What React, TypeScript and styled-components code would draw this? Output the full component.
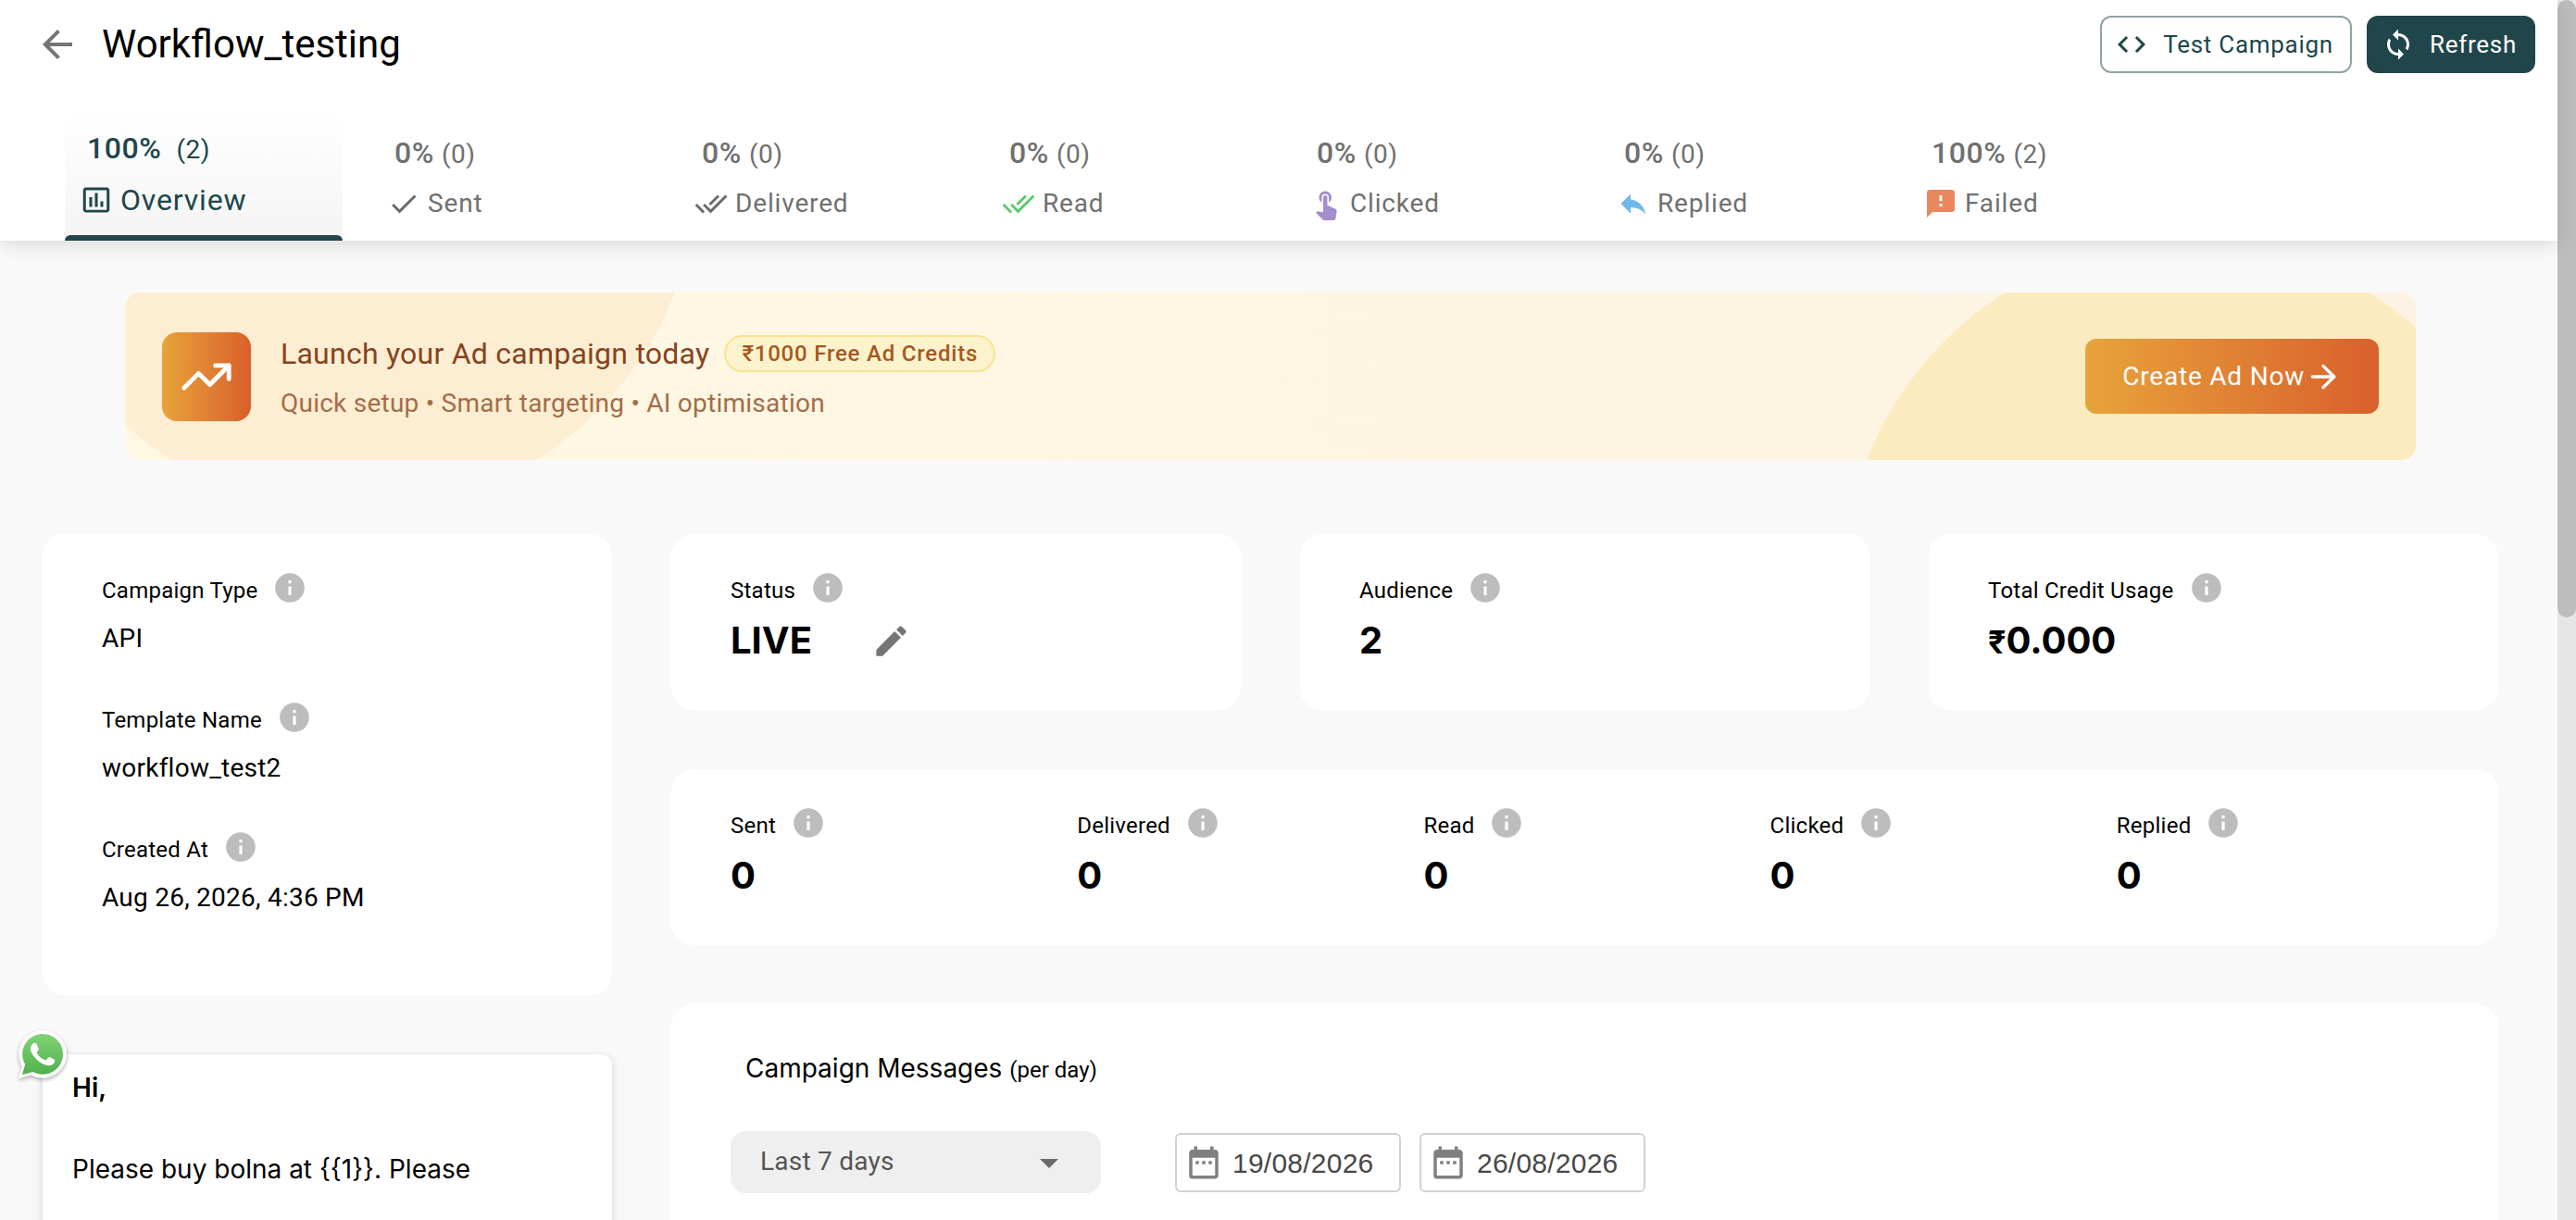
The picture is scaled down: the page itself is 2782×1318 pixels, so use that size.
import React from "react";
import styled, { createGlobalStyle, css } from "styled-components";
import {
  MdArrowBack,
  MdArrowDropDown,
  MdCheck,
  MdCode,
  MdDateRange,
  MdDoneAll,
  MdEdit,
  MdFeedback,
  MdInfo,
  MdInsertChartOutlined,
  MdLoop,
  MdReply,
  MdTouchApp,
} from "react-icons/md";
import { ArrowRight, TrendingUp } from "lucide-react";

const teal = "#20464b";
const roboto = 'Roboto, "Liberation Sans", sans-serif';
const inter = 'Inter, "Liberation Sans", sans-serif';
const sunset = "linear-gradient(90deg, #e8a33b 0%, #d9602c 100%)";

const GlobalStyle = createGlobalStyle`
  *, *::before, *::after { box-sizing: border-box; }
  body { margin: 0; background: #f9f9f9; font-family: ${roboto}; color: #000; }
  button, select, input { font: inherit; color: inherit; letter-spacing: inherit; }
  h1, h2, p, dl, dt, dd { margin: 0; font-weight: 400; }
  svg { display: block; flex: none; }
`;

const Shell = styled.div`
  display: flex;
  height: 100vh;
  overflow: hidden;
  letter-spacing: 0.015em;
`;

const Page = styled.div`
  flex: 1;
  min-width: 0;
  display: flex;
  flex-direction: column;
`;

const ScrollTrack = styled.div`
  flex: none;
  width: 20px;
  background: #e6e6e6;
`;

const ScrollThumb = styled.div`
  height: 50.6%;
  border-radius: 10px;
  background: #bdbdbd;
`;

const Header = styled.header`
  position: relative;
  z-index: 1;
  flex: none;
  background: #fff;
  box-shadow: 0 4px 20px rgba(0, 0, 0, 0.13);
`;

const TitleRow = styled.div`
  display: flex;
  align-items: center;
  height: 96px;
  padding: 0 24px 0 38px;
`;

const BackButton = styled.button`
  padding: 0;
  border: 0;
  background: none;
  color: #757575;
  cursor: pointer;
`;

const Title = styled.h1`
  flex: 1;
  padding-left: 24px;
  font-size: 42px;
  line-height: 48px;
  letter-spacing: 0;
`;

const Actions = styled.div`
  display: flex;
  gap: 16px;
`;

const ActionButton = styled.button<{ $filled?: boolean }>`
  display: flex;
  align-items: center;
  gap: 16px;
  height: 62px;
  padding: 0 18px 0 14px;
  border: 2px solid ${(p) => (p.$filled ? teal : "#90a3a5")};
  border-radius: 12px;
  background: ${(p) => (p.$filled ? teal : "#fff")};
  color: ${(p) => (p.$filled ? "#fff" : teal)};
  font-size: 26px;
  letter-spacing: 0.028em;
  cursor: pointer;
`;

const Tabs = styled.nav`
  display: flex;
  gap: 32px;
  padding: 24px 70px 0;
`;

const Tab = styled.button<{ $active?: boolean }>`
  display: flex;
  flex-direction: column;
  gap: 13px;
  width: 300px;
  height: 140px;
  padding: 25px 16px 0;
  border: 0;
  background: none;
  color: #707070;
  font-size: 28px;
  line-height: 40px;
  letter-spacing: 0.03em;
  text-align: left;
  cursor: pointer;
  ${(p) =>
    p.$active &&
    css`
      position: relative;
      gap: 14px;
      padding-top: 20px;
      background: linear-gradient(#fff, #f4f4f4);
      color: ${teal};
      &::after {
        content: "";
        position: absolute;
        inset: auto 0 0;
        height: 6px;
        border-radius: 6px 6px 0 0;
        background: ${teal};
      }
    `}
`;

const TabCount = styled.span<{ $active?: boolean }>`
  display: flex;
  align-items: baseline;
  gap: ${(p) => (p.$active ? 16 : 8)}px;
  padding-left: 8px;
  letter-spacing: 0.02em;
  strong {
    font-size: 32px;
    font-weight: 500;
  }
`;

const TabLabel = styled.span<{ $active?: boolean; $tint: string }>`
  display: flex;
  align-items: center;
  gap: 8px;
  font-size: ${(p) => (p.$active ? 32 : 28)}px;
  svg {
    color: ${(p) => p.$tint};
  }
`;

const Content = styled.main`
  flex: 1;
  min-height: 0;
  padding: 56px 64px 0 46px;
`;

const Banner = styled.section`
  position: relative;
  display: flex;
  align-items: center;
  gap: 32px;
  margin: 0 89px 80px;
  padding: 42px 40px;
  height: 181px;
  border-radius: 16px;
  overflow: hidden;
  background: linear-gradient(90deg, #fff8e3 0%, #fef6e2 50%, #fdf3e3 100%);
`;

const Blob = styled.span<{ $side: "left" | "right" }>`
  position: absolute;
  width: 30%;
  aspect-ratio: 1;
  border-radius: 50%;
  ${(p) =>
    p.$side === "left"
      ? "left: -5%; top: -505px; background: #fdeed3;"
      : "right: -5%; bottom: -505px; background: #fcebbf;"}
`;

const BannerIcon = styled.div`
  position: relative;
  display: grid;
  place-items: center;
  width: 96px;
  height: 96px;
  border-radius: 16px;
  background: ${sunset};
  color: #fff;
`;

const BannerText = styled.div`
  position: relative;
  flex: 1;
  display: flex;
  flex-direction: column;
  gap: 14px;
  padding-top: 4px;
  line-height: 40px;
`;

const BannerHeading = styled.div`
  display: flex;
  align-items: center;
  gap: 16px;
  h2 {
    color: #86431d;
    font-size: 32px;
  }
`;

const Chip = styled.span`
  height: 40px;
  padding: 0 17px;
  border: 2px solid #f7e391;
  border-radius: 20px;
  background: #fcf3cd;
  color: #a7581f;
  font-size: 24px;
  font-weight: 500;
  line-height: 37px;
  letter-spacing: 0.033em;
`;

const BannerNote = styled.p`
  color: #a56c47;
  font-size: 28px;
`;

const CreateButton = styled.button`
  position: relative;
  display: flex;
  align-items: center;
  height: 81px;
  padding: 0 40px;
  border: 0;
  border-radius: 12px;
  background: ${sunset};
  color: #fff;
  font-size: 28px;
  letter-spacing: 0.028em;
  cursor: pointer;
`;

const Columns = styled.div`
  display: grid;
  grid-template-columns: repeat(4, minmax(0, 1fr));
  gap: 64px;
`;

const Side = styled.div`
  display: flex;
  flex-direction: column;
  gap: 64px;
`;

const Primary = styled.div`
  grid-column: span 3;
  display: flex;
  flex-direction: column;
  gap: 64px;
`;

const StatGrid = styled.div`
  display: grid;
  grid-template-columns: repeat(3, minmax(0, 1fr));
  gap: 64px;
`;

const Card = styled.section`
  border-radius: 24px;
  background: #fff;
`;

const DetailsCard = styled(Card)`
  display: flex;
  flex-direction: column;
  gap: 48px;
  padding: 39px 64px 87px;
`;

const StatCard = styled(Card)`
  padding: 39px 64px 51px;
`;

const TotalsCard = styled(Card)`
  display: grid;
  grid-template-columns: repeat(5, minmax(0, 1fr));
  padding: 39px 38px 51px 64px;
`;

const Label = styled.dt`
  display: flex;
  align-items: flex-end;
  gap: 16px;
  font-size: 24px;
  line-height: 32px;
  svg {
    color: #bdbdbd;
  }
`;

const DetailValue = styled.dd`
  margin-top: 18px;
  font-size: 28px;
  line-height: 36px;
`;

const StatValue = styled.dd`
  display: flex;
  align-items: center;
  gap: 64px;
  height: 48px;
  margin-top: 14px;
  font-family: ${inter};
  font-size: 40px;
  font-weight: 700;
  line-height: 48px;
  letter-spacing: 0;
  small {
    font-size: 34px;
    line-height: 1;
  }
`;

const EditButton = styled.button`
  padding: 0;
  border: 0;
  background: none;
  color: #757575;
  cursor: pointer;
`;

const MessageCard = styled(Card)`
  position: relative;
  min-height: 400px;
  padding: 14px 32px;
  border-radius: 12px;
  box-shadow: 0 2px 10px rgba(0, 0, 0, 0.16);
  font-family: ${inter};
  font-size: 28px;
  line-height: 44px;
  letter-spacing: 0;
`;

const Greeting = styled.p`
  margin-bottom: 44px;
  font-weight: 600;
`;

const WhatsAppBadge = styled.svg`
  position: absolute;
  left: -26px;
  top: -26px;
  width: 52px;
  height: 52px;
  overflow: visible;
  filter: drop-shadow(0 2px 2px rgba(0, 0, 0, 0.3));
`;

const ChartCard = styled(Card)`
  min-height: 600px;
  padding: 49px 64px;
`;

const ChartTitle = styled.h2`
  height: 40px;
  padding-left: 16px;
  font-family: ${inter};
  font-size: 28px;
  line-height: 40px;
  letter-spacing: 0;
  small {
    font-family: ${roboto};
    font-size: 24px;
    line-height: 1;
  }
`;

const Filters = styled.div`
  display: flex;
  align-items: center;
  gap: 20px;
  margin-top: 48px;
`;

const RangeField = styled.label`
  position: relative;
  margin-right: 60px;
  color: #555;
  svg {
    position: absolute;
    right: 32px;
    top: 10px;
    color: #6b6b6b;
    pointer-events: none;
  }
`;

const RangeSelect = styled.select`
  appearance: none;
  display: block;
  width: 400px;
  height: 67px;
  padding: 0 32px 2px;
  border: 0;
  border-radius: 16px;
  background: #efefef;
  font-size: 28px;
`;

const DateField = styled.label`
  display: flex;
  align-items: center;
  gap: 10px;
  width: 244px;
  height: 64px;
  padding: 0 8px;
  border: 2px solid #d2d2d2;
  border-radius: 6px;
  color: #808080;
`;

const DateInput = styled.input`
  flex: 1;
  min-width: 0;
  padding: 2px 0 0;
  border: 0;
  background: none;
  color: #484848;
  font-family: "Liberation Sans", Arial, sans-serif;
  font-size: 30px;
`;

const grey = "#6b6b6b";

const tabs = [
  { label: "Overview", percent: 100, count: 2, Icon: MdInsertChartOutlined, tint: teal, active: true },
  { label: "Sent", percent: 0, count: 0, Icon: MdCheck, tint: grey },
  { label: "Delivered", percent: 0, count: 0, Icon: MdDoneAll, tint: grey },
  { label: "Read", percent: 0, count: 0, Icon: MdDoneAll, tint: "#5bcb6d" },
  { label: "Clicked", percent: 0, count: 0, Icon: MdTouchApp, tint: "#a38fcf" },
  { label: "Replied", percent: 0, count: 0, Icon: MdReply, tint: "#6fb9ea" },
  { label: "Failed", percent: 100, count: 2, Icon: MdFeedback, tint: "#e9875e" },
];

const details = [
  ["Campaign Type", "API"],
  ["Template Name", "workflow_test2"],
  ["Created At", "Aug 26, 2026, 4:36 PM"],
];

const totals = ["Sent", "Delivered", "Read", "Clicked", "Replied"];

const bubble =
  "M12.05 0C5.495 0 .16 5.335.157 11.892c0 2.096.547 4.142 1.588 5.945L.057 24l6.305-1.654a11.882 11.882 0 0 0 5.683 1.448h.005c6.554 0 11.89-5.335 11.893-11.893A11.821 11.821 0 0 0 20.465 3.488 11.815 11.815 0 0 0 12.05 0z";
const handset =
  "M17.472 14.382c-.297-.149-1.758-.867-2.03-.967-.273-.099-.471-.148-.67.15-.197.297-.767.966-.94 1.164-.173.199-.347.223-.644.075-.297-.15-1.255-.463-2.39-1.475-.883-.788-1.48-1.761-1.653-2.059-.173-.297-.018-.458.13-.606.134-.133.298-.347.446-.52.149-.174.198-.298.298-.497.099-.198.05-.371-.025-.52-.075-.149-.669-1.612-.916-2.207-.242-.579-.487-.5-.669-.51-.173-.008-.371-.01-.57-.01-.198 0-.52.074-.792.372-.272.297-1.04 1.016-1.04 2.479 0 1.462 1.065 2.875 1.213 3.074.149.198 2.096 3.2 5.077 4.487.709.306 1.262.489 1.694.625.712.227 1.36.195 1.871.118.571-.085 1.758-.719 2.006-1.413.248-.694.248-1.289.173-1.413-.074-.124-.272-.198-.57-.347";

function WhatsAppLogo() {
  return (
    <WhatsAppBadge viewBox="0 0 24 24" role="img" aria-label="WhatsApp">
      <defs>
        <linearGradient id="wa" x1="0" y1="0" x2="0" y2="1">
          <stop offset="0" stopColor="#7fd377" />
          <stop offset="1" stopColor="#52b04c" />
        </linearGradient>
      </defs>
      <path d={bubble} fill="#fff" />
      <path d={bubble} fill="url(#wa)" transform="translate(1.8 1.8) scale(0.85)" />
      <path d={handset} fill="#fff" />
    </WhatsAppBadge>
  );
}

function InfoLabel({ children }: { children: React.ReactNode }) {
  return (
    <Label>
      {children}
      <MdInfo size={38} />
    </Label>
  );
}

export default function App() {
  return (
    <>
      <GlobalStyle />
      <Shell>
        <Page>
          <Header>
            <TitleRow>
              <BackButton aria-label="Back">
                <MdArrowBack size={48} />
              </BackButton>
              <Title>Workflow_testing</Title>
              <Actions>
                <ActionButton>
                  <MdCode size={36} />
                  Test Campaign
                </ActionButton>
                <ActionButton $filled>
                  <MdLoop size={36} />
                  Refresh
                </ActionButton>
              </Actions>
            </TitleRow>
            <Tabs>
              {tabs.map(({ label, percent, count, Icon, tint, active }) => (
                <Tab key={label} $active={active}>
                  <TabCount $active={active}>
                    <strong>{percent}%</strong>
                    <span>({count})</span>
                  </TabCount>
                  <TabLabel $active={active} $tint={tint}>
                    <Icon size={36} />
                    {label}
                  </TabLabel>
                </Tab>
              ))}
            </Tabs>
          </Header>

          <Content>
            <Banner>
              <Blob $side="left" />
              <Blob $side="right" />
              <BannerIcon>
                <TrendingUp size={58} />
              </BannerIcon>
              <BannerText>
                <BannerHeading>
                  <h2>Launch your Ad campaign today</h2>
                  <Chip>₹1000 Free Ad Credits</Chip>
                </BannerHeading>
                <BannerNote>Quick setup • Smart targeting • AI optimisation</BannerNote>
              </BannerText>
              <CreateButton>
                Create Ad Now
                <ArrowRight size={40} />
              </CreateButton>
            </Banner>

            <Columns>
              <Side>
                <DetailsCard as="dl">
                  {details.map(([name, value]) => (
                    <div key={name}>
                      <InfoLabel>{name}</InfoLabel>
                      <DetailValue>{value}</DetailValue>
                    </div>
                  ))}
                </DetailsCard>
                <MessageCard>
                  <WhatsAppLogo />
                  <Greeting>Hi,</Greeting>
                  <p>{"Please buy bolna at {{1}}. Please"}</p>
                </MessageCard>
              </Side>

              <Primary>
                <StatGrid>
                  <StatCard as="dl">
                    <InfoLabel>Status</InfoLabel>
                    <StatValue>
                      LIVE
                      <EditButton aria-label="Edit status">
                        <MdEdit size={43} />
                      </EditButton>
                    </StatValue>
                  </StatCard>
                  <StatCard as="dl">
                    <InfoLabel>Audience</InfoLabel>
                    <StatValue>2</StatValue>
                  </StatCard>
                  <StatCard as="dl">
                    <InfoLabel>Total Credit Usage</InfoLabel>
                    <StatValue>
                      <span>
                        <small>₹</small>0.000
                      </span>
                    </StatValue>
                  </StatCard>
                </StatGrid>

                <TotalsCard>
                  {totals.map((name) => (
                    <dl key={name}>
                      <InfoLabel>{name}</InfoLabel>
                      <StatValue>0</StatValue>
                    </dl>
                  ))}
                </TotalsCard>

                <ChartCard>
                  <ChartTitle>
                    Campaign Messages <small>(per day)</small>
                  </ChartTitle>
                  <Filters>
                    <RangeField>
                      <RangeSelect aria-label="Date range" defaultValue="7">
                        <option value="7">Last 7 days</option>
                      </RangeSelect>
                      <MdArrowDropDown size={48} />
                    </RangeField>
                    <DateField>
                      <MdDateRange size={42} />
                      <DateInput aria-label="From date" defaultValue="19/08/2026" />
                    </DateField>
                    <DateField>
                      <MdDateRange size={42} />
                      <DateInput aria-label="To date" defaultValue="26/08/2026" />
                    </DateField>
                  </Filters>
                </ChartCard>
              </Primary>
            </Columns>
          </Content>
        </Page>
        <ScrollTrack aria-hidden="true">
          <ScrollThumb />
        </ScrollTrack>
      </Shell>
    </>
  );
}
